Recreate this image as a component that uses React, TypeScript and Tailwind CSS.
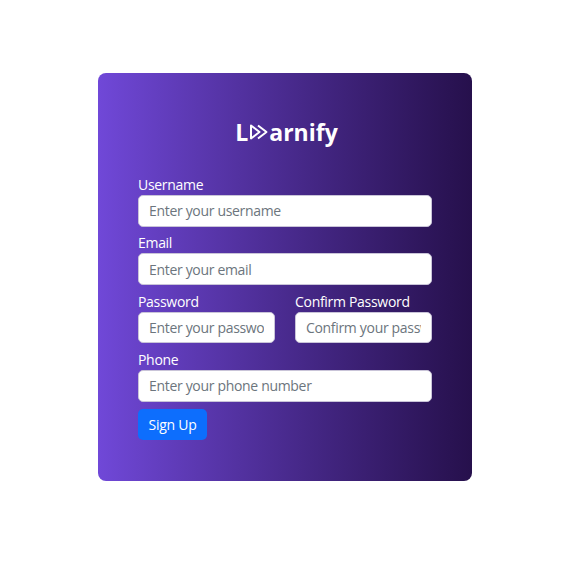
import React from 'react';

const inputClass =
  'block w-full h-[31.5px] px-[10px] rounded-[5px] border border-[#c9c4d8] bg-white text-[14px] tracking-[-0.32px] text-[#212529] placeholder:text-[#6c757d] outline-none min-w-0';

const Field: React.FC<{ label: string; placeholder: string; type?: string }> = ({ label, placeholder, type = 'text' }) => {
  return (
    <div className="flex flex-col min-w-0">
      <label className="text-[14px] tracking-[-0.3px] leading-[20px] text-white">{label}</label>
      <input type={type === 'password' ? 'text' : type} placeholder={placeholder} className={inputClass} />
    </div>
  );
};

export default function App() {
  return (
    <div className="w-[573px] h-[573px] bg-white pl-[98px] pt-[73px] font-['Open_Sans',sans-serif]">
      <div className="w-[374px] h-[408px] rounded-[8px] bg-gradient-to-r from-[#7048d8] to-[#26104c] px-[40px] pt-[40px]">
        {/* Logo */}
        <div className="flex items-center justify-center h-[38px] pl-[3px] text-white text-[23px] font-bold leading-none">
          <span>L</span>
          <svg width="18" height="16" viewBox="0 0 18 16" fill="none" stroke="currentColor" strokeWidth="2" strokeLinejoin="round" className="ml-[2px] mr-[1px]">
            <path d="M1 1.5 L9.5 8 L1 14.5 Z" />
            <path d="M8 1.5 L16.5 8 L8 14.5" />
          </svg>
          <span>arnify</span>
        </div>
        <div className="mt-[24px] flex flex-col gap-[6.9px]">
          <Field label="Username" placeholder="Enter your username" />
          <Field label="Email" placeholder="Enter your email" type="email" />
          <div className="grid grid-cols-2 gap-x-[20px]">
            <Field label="Password" placeholder="Enter your password" type="password" />
            <Field label="Confirm Password" placeholder="Confirm your password" type="password" />
          </div>
          <Field label="Phone" placeholder="Enter your phone number" />
        </div>
        <button className="mt-[7px] h-[31.5px] w-[69px] rounded-[5px] bg-[#0d6efd] text-white text-[14px] tracking-[-0.27px]">Sign Up</button>
      </div>
    </div>
  );
}
